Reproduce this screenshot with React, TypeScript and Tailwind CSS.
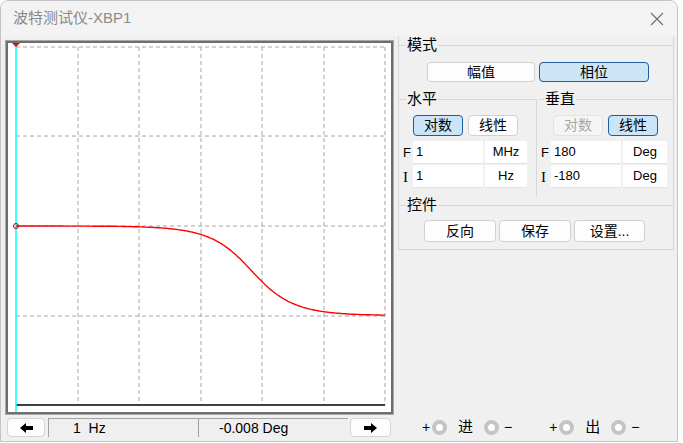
import React from "react";

const cjk = "font-['Liberation_Sans','Noto_Sans_CJK_SC',sans-serif]";

function phaseCurve() {
  const pts: string[] = [];
  for (let x = 16; x <= 385; x += 1) {
    const dec = (x - 16) / 61.5;
    const deg = (Math.atan(Math.pow(10, dec - 3.83)) * 180) / Math.PI;
    const y = 226 + deg * (358 / 360);
    pts.push(`${x - 8},${(y - 43).toFixed(1)}`);
  }
  return pts.join(" ");
}

function Plot() {
  const vx = [78, 139, 201, 262, 324, 385];
  const hy = [47, 136, 226, 316];
  return (
    <div className="mt-[4px] ml-[4px] w-[389px] h-[375px] border border-[#a8a8a8]">
      <div className="w-full h-full border-2 border-[#6e6e6e] bg-white">
        <svg width="381" height="369" className="block">
          {vx.map((x) => (
            <line key={x} x1={x - 8} y1={4} x2={x - 8} y2={362} stroke="#a6a6a6" strokeDasharray="4 3" />
          ))}
          {hy.map((y) => (
            <line key={y} x1={8} y1={y - 43} x2={377} y2={y - 43} stroke="#a6a6a6" strokeDasharray="4 3" />
          ))}
          <line x1={8} y1={362} x2={377} y2={362} stroke="#000" strokeWidth="1.5" />
          <line x1={8} y1={0} x2={8} y2={369} stroke="#00ffff" strokeWidth="1.5" />
          <polyline points={phaseCurve()} fill="none" stroke="#ff0000" strokeWidth="1.4" />
          <polygon points="4,0 12,0 8,4" fill="#ff0000" />
          <circle cx={8} cy={183} r={2.5} fill="none" stroke="#8a1a1a" strokeWidth="1" />
        </svg>
      </div>
    </div>
  );
}

function Btn({ label, w, on, off }: { label: string; w: string; on?: boolean; off?: boolean }) {
  const tone = on
    ? "bg-[#cce4f7] border-[#1a5fa0] text-black"
    : off
    ? "bg-[#f5f5f5] border-[#e2e2e2] text-[#a8a8a8]"
    : "bg-[#fdfdfd] border-[#d0d0d0] text-black";
  return (
    <div className={`${w} h-full flex items-center justify-center border rounded-[4px] text-[14px] ${tone}`}>{label}</div>
  );
}

function Field({ letter, value, unit, iw, uw, serif }: { letter: string; value: string; unit: string; iw: string; uw: string; serif?: boolean }) {
  return (
    <div className="flex items-stretch h-[23px]">
      <div
        className={`w-[12px] flex ${serif ? "items-end pb-[0px] font-['Liberation_Serif',serif] text-[15px]" : "items-center text-[13px]"} pl-[2px]`}
      >
        {letter}
      </div>
      <div className={`${iw} bg-white border-b border-[#e4e4e4] flex items-center pl-[3px] text-[13px] font-['Liberation_Sans',sans-serif]`}>
        {value}
      </div>
      <div className={`${uw} ml-[2px] bg-white border-b border-[#e4e4e4] flex items-center justify-center text-[13px] font-['Liberation_Sans',sans-serif]`}>
        {unit}
      </div>
    </div>
  );
}

function Panel() {
  return (
    <div className="ml-[4px] w-[276px] border-x border-b border-[#d8d8d8]">
      <fieldset className="border-t border-[#d8d8d8] pb-[8px]">
        <legend className="ml-[7px] px-[1px] text-[15px] leading-[18px]">模式</legend>
        <div className="mt-[8px] h-[20px] flex gap-[4px] pl-[28px]">
          <Btn label="幅值" w="w-[108px]" />
          <Btn label="相位" w="w-[110px]" on />
        </div>
      </fieldset>
      <div className="flex">
        <fieldset className="w-[138px] border-t border-r border-[#d8d8d8] pb-[8px]">
          <legend className="ml-[7px] px-[1px] text-[15px] leading-[18px]">水平</legend>
          <div className="mt-[7px] h-[21px] flex gap-[5px] pl-[14px]">
            <Btn label="对数" w="w-[50px]" on />
            <Btn label="线性" w="w-[50px]" />
          </div>
          <div className="mt-[5px] flex flex-col gap-[1px] pl-[2px]">
            <Field letter="F" value="1" unit="MHz" iw="w-[70px]" uw="w-[42px]" />
            <Field letter="I" value="1" unit="Hz" iw="w-[70px]" uw="w-[42px]" serif />
          </div>
        </fieldset>
        <fieldset className="flex-1 border-t border-[#d8d8d8] ml-[2px] pb-[8px]">
          <legend className="ml-[5px] px-[1px] text-[15px] leading-[18px]">垂直</legend>
          <div className="mt-[7px] h-[21px] flex gap-[5px] pl-[14px]">
            <Btn label="对数" w="w-[50px]" off />
            <Btn label="线性" w="w-[50px]" on />
          </div>
          <div className="mt-[5px] flex flex-col gap-[1px]">
            <Field letter="F" value="180" unit="Deg" iw="w-[70px]" uw="w-[44px]" />
            <Field letter="I" value="-180" unit="Deg" iw="w-[70px]" uw="w-[44px]" serif />
          </div>
        </fieldset>
      </div>
      <fieldset className="border-t border-[#d8d8d8] pb-[7px]">
        <legend className="ml-[7px] px-[1px] text-[15px] leading-[18px]">控件</legend>
        <div className="mt-[6px] h-[22px] flex gap-[3px] pl-[25px]">
          <Btn label="反向" w="w-[72px]" />
          <Btn label="保存" w="w-[72px]" />
          <Btn label="设置..." w="w-[71px]" />
        </div>
      </fieldset>
    </div>
  );
}

function Arrow({ dir }: { dir: "l" | "r" }) {
  return (
    <svg width="13" height="10" viewBox="0 0 13 10" className={dir === "r" ? "scale-x-[-1]" : ""}>
      <polygon points="0,5 6,0 6,3 13,3 13,7 6,7 6,10" fill="#000" />
    </svg>
  );
}

function Jack() {
  return (
    <div className="w-[15px] h-[15px] rounded-full border-[4px] border-[#c4c4c4] bg-white" />
  );
}

function Connector({ name, gapL }: { name: string; gapL: string }) {
  return (
    <div className={`flex items-center ${gapL} text-[14px]`}>
      <span className="text-[14px] font-['Liberation_Sans',sans-serif] w-[10px]">+</span>
      <Jack />
      <span className="mx-[11px] text-[15px]">{name}</span>
      <Jack />
      <span className="ml-[5px] text-[14px] font-['Liberation_Sans',sans-serif]">−</span>
    </div>
  );
}

export default function App() {
  return (
    <div className={`w-[683px] h-[443px] bg-white ${cjk}`}>
      <div className="w-[678px] h-[442px] bg-[#f0f0f0] border border-[#c4c4c4] rounded-t-[8px] flex flex-col overflow-hidden">
        <div className="h-[35px] bg-[#f3f3f3] flex items-center justify-between pl-[12px] pr-[13px]">
          <span className="text-[15px] text-[#8a8a8a]">波特测试仪-XBP1</span>
          <svg width="14" height="14" viewBox="0 0 14 14">
            <path d="M1 1 L13 13 M13 1 L1 13" stroke="#6e6e6e" strokeWidth="1.1" />
          </svg>
        </div>
        <div className="flex items-start">
          <Plot />
          <Panel />
        </div>
        <div className="mt-[3px] h-[19px] flex items-stretch">
          <div className="ml-[6px] w-[38px] bg-[#fdfdfd] border border-[#d4d4d4] rounded-[4px] flex items-center justify-center">
            <Arrow dir="l" />
          </div>
          <div className="ml-[3px] w-[150px] border-t border-l border-[#a0a0a0] bg-[#efefef] flex items-center pl-[24px] text-[14px] font-['Liberation_Sans',sans-serif] whitespace-pre">
            1  Hz
          </div>
          <div className="w-[150px] border-t border-l border-[#a0a0a0] bg-[#efefef] flex items-center pl-[20px] text-[14px] font-['Liberation_Sans',sans-serif]">
            -0.008 Deg
          </div>
          <div className="ml-[2px] w-[41px] bg-[#fdfdfd] border border-[#d4d4d4] rounded-[4px] flex items-center justify-center">
            <Arrow dir="r" />
          </div>
          <Connector name="进" gapL="ml-[31px]" />
          <Connector name="出" gapL="ml-[37px]" />
        </div>
      </div>
    </div>
  );
}
